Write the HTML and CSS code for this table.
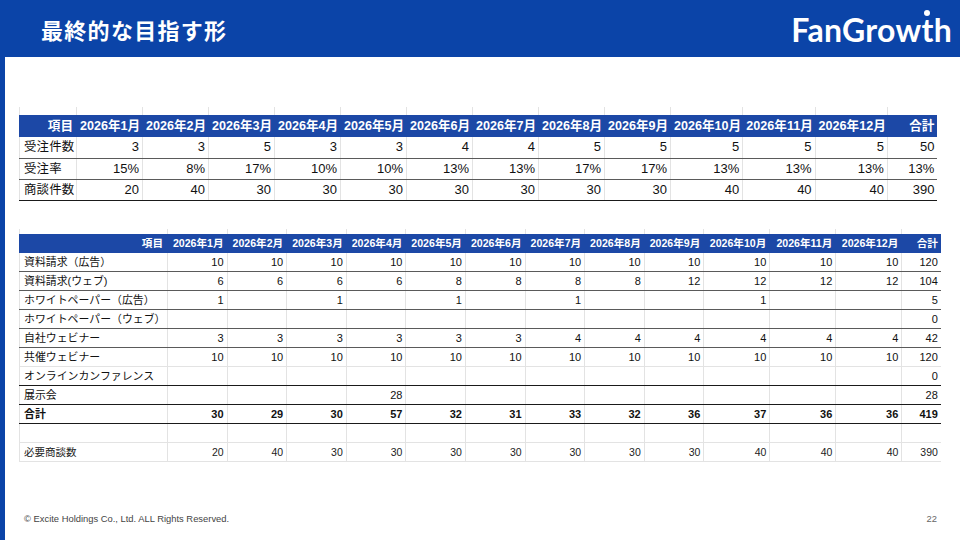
FILE: index.html
```html
<!DOCTYPE html>
<html lang="ja">
<head>
<meta charset="utf-8">
<link rel="stylesheet" href="styles.css">
</head>
<body>
<header class="top">
  <h1 class="title">最終的な目指す形</h1>
  <div class="logo">FanGrow<span class="lt">t</span>h</div>
</header>
<div class="frame">
  <div class="strip"></div>
  <main class="content">
    <table class="sheet t1">
      <colgroup>
        <col class="c1-lab"><col class="c1-m" span="9"><col class="c1-mw" span="3"><col class="c1-tot">
      </colgroup>
      <tr class="grid"><td></td><td></td><td></td><td></td><td></td><td></td><td></td><td></td><td></td><td></td><td></td><td></td><td></td><td></td></tr>
      <tr class="head"><th>項目</th><th>2026年1月</th><th>2026年2月</th><th>2026年3月</th><th>2026年4月</th><th>2026年5月</th><th>2026年6月</th><th>2026年7月</th><th>2026年8月</th><th>2026年9月</th><th>2026年10月</th><th>2026年11月</th><th>2026年12月</th><th>合計</th></tr>
      <tr class="d"><td class="lab">受注件数</td><td>3</td><td>3</td><td>5</td><td>3</td><td>3</td><td>4</td><td>4</td><td>5</td><td>5</td><td>5</td><td>5</td><td>5</td><td>50</td></tr>
      <tr class="d"><td class="lab">受注率</td><td>15%</td><td>8%</td><td>17%</td><td>10%</td><td>10%</td><td>13%</td><td>13%</td><td>17%</td><td>17%</td><td>13%</td><td>13%</td><td>13%</td><td>13%</td></tr>
      <tr class="k"><td class="lab">商談件数</td><td>20</td><td>40</td><td>30</td><td>30</td><td>30</td><td>30</td><td>30</td><td>30</td><td>30</td><td>40</td><td>40</td><td>40</td><td>390</td></tr>
    </table>

    <table class="sheet t2">
      <colgroup>
        <col class="c2-lab"><col class="c2-m" span="9"><col class="c2-mw" span="3"><col class="c2-tot">
      </colgroup>
      <tr class="grid"><td></td><td></td><td></td><td></td><td></td><td></td><td></td><td></td><td></td><td></td><td></td><td></td><td></td><td></td></tr>
      <tr class="head"><th>項目</th><th>2026年1月</th><th>2026年2月</th><th>2026年3月</th><th>2026年4月</th><th>2026年5月</th><th>2026年6月</th><th>2026年7月</th><th>2026年8月</th><th>2026年9月</th><th>2026年10月</th><th>2026年11月</th><th>2026年12月</th><th>合計</th></tr>
      <tr class="d"><td class="lab">資料請求（広告）</td><td>10</td><td>10</td><td>10</td><td>10</td><td>10</td><td>10</td><td>10</td><td>10</td><td>10</td><td>10</td><td>10</td><td>10</td><td>120</td></tr>
      <tr class="d"><td class="lab">資料請求(ウェブ)</td><td>6</td><td>6</td><td>6</td><td>6</td><td>8</td><td>8</td><td>8</td><td>8</td><td>12</td><td>12</td><td>12</td><td>12</td><td>104</td></tr>
      <tr class="d"><td class="lab">ホワイトペーパー（広告）</td><td>1</td><td></td><td>1</td><td></td><td>1</td><td></td><td>1</td><td></td><td></td><td>1</td><td></td><td></td><td>5</td></tr>
      <tr class="d"><td class="lab">ホワイトペーパー（ウェブ）</td><td></td><td></td><td></td><td></td><td></td><td></td><td></td><td></td><td></td><td></td><td></td><td></td><td>0</td></tr>
      <tr class="d"><td class="lab">自社ウェビナー</td><td>3</td><td>3</td><td>3</td><td>3</td><td>3</td><td>3</td><td>4</td><td>4</td><td>4</td><td>4</td><td>4</td><td>4</td><td>42</td></tr>
      <tr class="l"><td class="lab">共催ウェビナー</td><td>10</td><td>10</td><td>10</td><td>10</td><td>10</td><td>10</td><td>10</td><td>10</td><td>10</td><td>10</td><td>10</td><td>10</td><td>120</td></tr>
      <tr class="k"><td class="lab">オンラインカンファレンス</td><td></td><td></td><td></td><td></td><td></td><td></td><td></td><td></td><td></td><td></td><td></td><td></td><td>0</td></tr>
      <tr class="k"><td class="lab">展示会</td><td></td><td></td><td></td><td>28</td><td></td><td></td><td></td><td></td><td></td><td></td><td></td><td></td><td>28</td></tr>
      <tr class="k sum"><td class="lab">合計</td><td>30</td><td>29</td><td>30</td><td>57</td><td>32</td><td>31</td><td>33</td><td>32</td><td>36</td><td>37</td><td>36</td><td>36</td><td>419</td></tr>
      <tr class="l"><td class="lab"></td><td></td><td></td><td></td><td></td><td></td><td></td><td></td><td></td><td></td><td></td><td></td><td></td><td></td></tr>
      <tr class="l need"><td class="lab">必要商談数</td><td>20</td><td>40</td><td>30</td><td>30</td><td>30</td><td>30</td><td>30</td><td>30</td><td>30</td><td>40</td><td>40</td><td>40</td><td>390</td></tr>
    </table>

    <footer class="foot">
      <span class="copy">© Excite Holdings Co., Ltd. ALL Rights Reserved.</span>
      <span class="page">22</span>
    </footer>
  </main>
</div>
</body>
</html>
```

FILE: styles.css
```css
* { box-sizing: border-box; }
html, body { margin: 0; padding: 0; }
body {
  width: 960px;
  height: 540px;
  overflow: hidden;
  background: #fff;
  font-family: "Liberation Sans", "Noto Sans CJK JP", sans-serif;
  color: #111;
}

.top {
  height: 57px;
  background: #0b44a8;
  display: flex;
  align-items: center;
  justify-content: space-between;
  padding: 0 8px 0 41px;
}
.title {
  margin: 0;
  color: #fff;
  font-family: "Noto Sans CJK JP", sans-serif;
  font-weight: 700;
  font-size: 22px;
  letter-spacing: 1.3px;
  line-height: 1;
  padding-top: 1px;
}
.logo {
  color: #fff;
  font-family: "Lato", sans-serif;
  font-weight: 700;
  font-size: 32px;
  letter-spacing: 0.3px;
  line-height: 1;
  padding-top: 2px;
}
.lt { position: relative; }
.lt::before {
  content: "";
  position: absolute;
  left: 3px;
  top: 0px;
  width: 6px;
  height: 6px;
  border-radius: 50%;
  background: #fff;
  box-shadow: 0 0 0 1.5px #0b44a8;
}

.frame {
  display: flex;
  height: 483px;
}
.strip {
  width: 5px;
  background: #0b44a8;
  flex: none;
}
.content {
  flex: 1;
  display: flex;
  flex-direction: column;
  padding-left: 14px;
}

.sheet {
  border-collapse: collapse;
  table-layout: fixed;
}
.sheet td, .sheet th {
  padding: 0 3px;
  text-align: right;
  white-space: nowrap;
  overflow: hidden;
  border-left: 1px solid #e3e3e3;
}
.sheet .grid td { border-bottom: none; padding: 0; }
.sheet .head th {
  background: #1c48a6;
  color: #fff;
  font-weight: 700;
  border-left-color: #1c48a6;
}
.sheet td.lab { text-align: left; }
.sheet tr.d td { border-bottom: 1px solid #5a5a5a; }
.sheet tr.k td { border-bottom: 1px solid #1a1a1a; }
.sheet tr.l td { border-bottom: 1px solid #e3e3e3; }

/* table 1 */
.t1 { width: 918px; margin-top: 50px; }
.c1-lab { width: 57px; }
.c1-m { width: 66px; }
.c1-mw { width: 72.3px; }
.c1-tot { width: 50px; }
.t1 .grid td { height: 8px; }
.t1 .head th { height: 22px; font-size: 12.6px; line-height: 22px; }
.t1 td { height: 21px; font-size: 13px; line-height: 20px; }
.t1 td.lab { font-size: 12.4px; padding-left: 4px; letter-spacing: 0.2px; }

/* table 2 */
.t2 { width: 920px; margin-top: 28px; }
.c2-lab { width: 148px; }
.c2-m { width: 59.6px; }
.c2-mw { width: 66px; }
.c2-tot { width: 39px; }
.t2 .grid td { height: 5px; }
.t2 .head th { height: 19px; font-size: 10.6px; line-height: 19px; }
.t2 .head th:first-child { padding-right: 4px; }
.t2 td { height: 19px; font-size: 11px; line-height: 18px; }
.t2 td.lab { font-size: 10.9px; padding-left: 4px; }
.t2 .sum td { font-weight: 700; }
.t2 .need td { font-size: 10.5px; color: #222; }

.foot {
  margin-top: auto;
  display: flex;
  justify-content: space-between;
  align-items: center;
  padding: 0 23px 8px 5px;
  height: 36px;
  font-family: "Liberation Sans", sans-serif;
  font-size: 9.4px;
  color: #444;
}
.page { color: #666; font-size: 9.4px; }
```
